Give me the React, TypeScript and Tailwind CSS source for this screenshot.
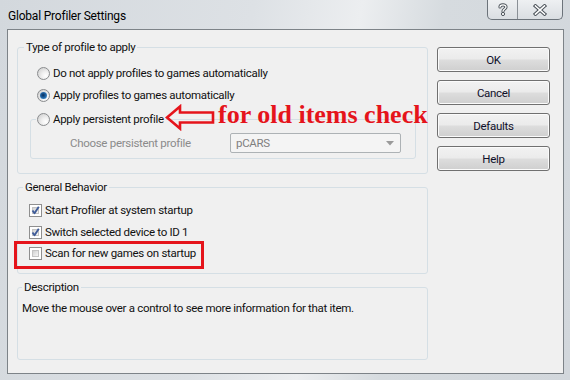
const Radio = ({ checked = false }: { checked?: boolean }) => (
  <span className="w-[13px] h-[13px] shrink-0 rounded-full border border-[#8a8c8e] bg-[radial-gradient(circle_at_70%_70%,#ffffff_0%,#f0f0f0_35%,#c9c9c9_100%)] flex items-center justify-center">
    {checked && (
      <span className="w-[7px] h-[7px] rounded-full bg-[radial-gradient(circle_at_45%_45%,#0a2f5a_0%,#1a5b9a_40%,#56a9e6_100%)]"></span>
    )}
  </span>
)

const Checkbox = ({ checked = false }: { checked?: boolean }) => (
  <span className="relative w-[13px] h-[13px] shrink-0 border border-[#8f8f8f] bg-white p-[2px]">
    <span className="block w-full h-full bg-[linear-gradient(135deg,#d2d2d2,#f6f6f6)] border border-[#c4c4c4]"></span>
    {checked && (
      <svg className="absolute left-0 top-0" width="11" height="11" viewBox="0 0 11 11">
        <path d="M2.5 5.5 L4.5 8.2 L8.8 1.8" fill="none" stroke="#3f5c99" strokeWidth="1.9" strokeLinejoin="round" />
      </svg>
    )}
  </span>
)

const Button = ({ label }: { label: string }) => (
  <div className="w-[113px] h-[25px] rounded-[3px] border border-[#707070] bg-[linear-gradient(to_bottom,#f2f2f2_0%,#ebebeb_48%,#dddddd_52%,#cfcfcf_100%)] shadow-[inset_0_0_0_1px_#fbfbfb] flex items-center justify-center text-[#10102a]">
    {label}
  </div>
)

export default function App() {
  return (
    <div className="relative w-[570px] h-[380px] flex flex-col overflow-hidden bg-[linear-gradient(100deg,#d3d8dd_0%,#dde1e5_40%,#eceef0_57%,#d6dbdf_70%,#d2d7dc_100%)] font-['Roboto',sans-serif] text-[11.5px] tracking-[-0.3px] leading-[16px] text-[#111]">
      {/* title bar */}
      <div className="h-[29px] flex items-start shrink-0">
        <span className="pl-[8px] pt-[8px] text-[12px] tracking-[-0.2px] text-black">Global Profiler Settings</span>
        <div className="ml-auto mr-[7px] flex h-[20px] rounded-b-[5px] border border-t-0 border-[#6c737a] overflow-hidden bg-[linear-gradient(to_bottom,#eef0f2,#dadee2)]">
          <div className="w-[29px] flex items-center justify-center">
            <svg width="10" height="13" viewBox="0 0 10 13">
              <path d="M2 4 C2 1.2 8 1 8 4 C8 6 5 6 5 8.3" fill="none" stroke="#4c535a" strokeWidth="3.2" strokeLinecap="round" />
              <path d="M2 4 C2 1.2 8 1 8 4 C8 6 5 6 5 8.3" fill="none" stroke="#ffffff" strokeWidth="1.3" strokeLinecap="round" />
              <circle cx="5" cy="11" r="1.6" fill="#ffffff" stroke="#4c535a" strokeWidth="1" />
            </svg>
          </div>
          <div className="w-[45px] border-l border-[#8a9096] flex items-center justify-center">
            <svg width="14" height="12" viewBox="0 0 14 12">
              <path d="M2.5 2 L11.5 10 M11.5 2 L2.5 10" fill="none" stroke="#4c535a" strokeWidth="3.6" strokeLinecap="square" />
              <path d="M2.5 2 L11.5 10 M11.5 2 L2.5 10" fill="none" stroke="#ffffff" strokeWidth="1.6" strokeLinecap="square" />
            </svg>
          </div>
        </div>
      </div>

      {/* client area */}
      <div className="flex-1 ml-[7px] mr-[6px] mb-[6px] border border-[#7d8388] bg-[#f0f0f0] flex gap-[9px] pl-[9px] pt-[9px]">
        <div className="w-[411px] flex flex-col gap-[5px]">
          <fieldset className="h-[135px] border border-[#d5dfe5] rounded-[3px]">
            <legend className="ml-[6px] px-[2px] leading-[16px]">Type of profile to apply</legend>
            <div className="flex flex-col">
              <div className="mt-[10px] pl-[19px] h-[16px] flex items-center gap-[3px]">
                <Radio />
                <span>Do not apply profiles to games automatically</span>
              </div>
              <div className="mt-[6px] pl-[19px] h-[16px] flex items-center gap-[3px]">
                <Radio checked />
                <span>Apply profiles to games automatically</span>
              </div>
              <fieldset className="mt-[8px] ml-[12px] w-[386px] h-[48px] border border-[#d5dfe5] rounded-[3px]">
                <legend className="ml-[5px] pl-[1px] pr-[2px] h-[16px] flex items-center gap-[3px]">
                  <Radio />
                  <span>Apply persistent profile</span>
                </legend>
                <div className="mt-[6px] pl-[39px] flex items-center">
                  <span className="w-[160px] text-[#8b8b8b]">Choose persistent profile</span>
                  <div className="w-[171px] h-[20px] rounded-[2px] border border-[#adb2b5] bg-[#f4f4f4] flex items-center pl-[5px] pr-[6px] text-[#7f7f7f]">
                    <span>pCARS</span>
                    <svg className="ml-auto" width="8" height="5" viewBox="0 0 8 5">
                      <path d="M0 0 L8 0 L4 4.5 Z" fill="#9a9a9a" />
                    </svg>
                  </div>
                </div>
              </fieldset>
            </div>
          </fieldset>

          <fieldset className="h-[95px] border border-[#d5dfe5] rounded-[3px]">
            <legend className="ml-[5px] px-[2px] leading-[16px]">General Behavior</legend>
            <div className="flex flex-col pl-[11px]">
              <div className="mt-[7px] h-[16px] flex items-center gap-[3px]">
                <Checkbox checked />
                <span>Start Profiler at system startup</span>
              </div>
              <div className="mt-[6px] h-[16px] flex items-center gap-[3px]">
                <Checkbox checked />
                <span>Switch selected device to ID 1</span>
              </div>
              <div className="mt-[5px] h-[16px] flex items-center gap-[3px]">
                <Checkbox />
                <span>Scan for new games on startup</span>
              </div>
            </div>
          </fieldset>

          <fieldset className="h-[81px] border border-[#d5dfe5] rounded-[3px]">
            <legend className="ml-[4px] px-[2px] leading-[16px]">Description</legend>
            <div className="mt-[5px] pl-[4px]">Move the mouse over a control to see more information for that item.</div>
          </fieldset>
        </div>

        <div className="mt-[8px] flex flex-col gap-[8px]">
          <Button label="OK" />
          <Button label="Cancel" />
          <Button label="Defaults" />
          <Button label="Help" />
        </div>
      </div>

      {/* red annotations */}
      <svg className="absolute left-[165px] top-[104px]" width="52" height="27" viewBox="0 0 52 27">
        <path d="M2 13.5 L15 2.5 L15 8.5 L48 8.5 L48 18.5 L15 18.5 L15 24.5 Z" fill="none" stroke="#e5141b" strokeWidth="2.6" strokeLinejoin="miter" />
      </svg>
      <span className="absolute left-[218px] top-[102px] font-['Liberation_Serif',serif] font-bold text-[26px] leading-[26px] tracking-normal text-[#e5141b]">for old items check</span>
      <div className="absolute left-[14px] top-[241px] w-[190px] h-[28px] border-[3px] border-[#e5141b]"></div>
    </div>
  )
}
